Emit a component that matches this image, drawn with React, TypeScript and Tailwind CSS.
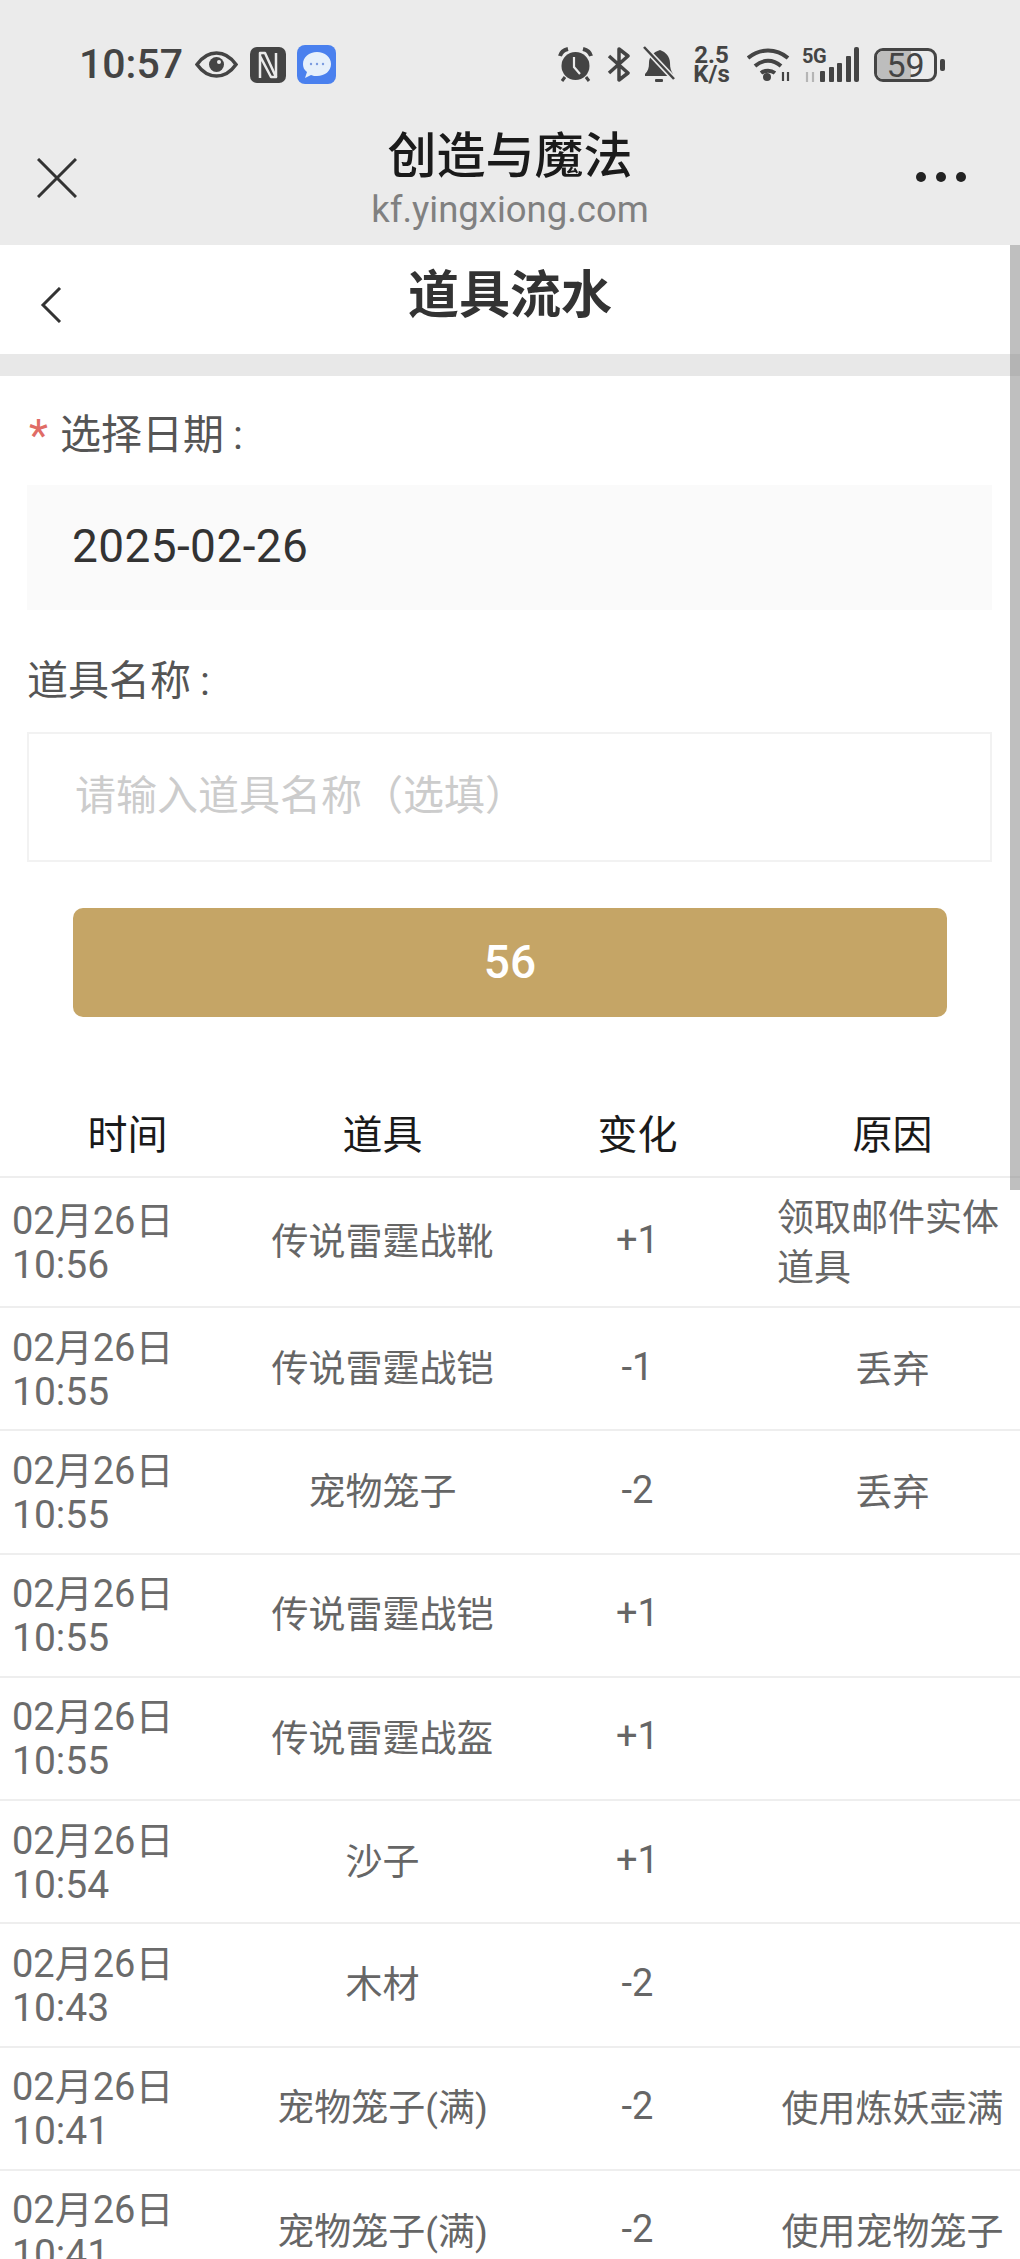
const font = "font-['Roboto','Noto_Sans_CJK_SC',sans-serif]";

const rows = [
  { date: "02月26日", time: "10:56", item: "传说雷霆战靴", delta: "+1", reason: "领取邮件实体道具" },
  { date: "02月26日", time: "10:55", item: "传说雷霆战铠", delta: "-1", reason: "丢弃" },
  { date: "02月26日", time: "10:55", item: "宠物笼子", delta: "-2", reason: "丢弃" },
  { date: "02月26日", time: "10:55", item: "传说雷霆战铠", delta: "+1", reason: "" },
  { date: "02月26日", time: "10:55", item: "传说雷霆战盔", delta: "+1", reason: "" },
  { date: "02月26日", time: "10:54", item: "沙子", delta: "+1", reason: "" },
  { date: "02月26日", time: "10:43", item: "木材", delta: "-2", reason: "" },
  { date: "02月26日", time: "10:41", item: "宠物笼子(满)", delta: "-2", reason: "使用炼妖壶满" },
  { date: "02月26日", time: "10:41", item: "宠物笼子(满)", delta: "-2", reason: "使用宠物笼子" },
];

const StatusLeft = () => (
  <div className="flex items-center">
    <span className="text-[41px] font-medium leading-none text-[#444] ml-[79px] w-[103px]">10:57</span>
    <svg className="ml-[13px]" width="43" height="27" viewBox="0 0 43 27">
      <path d="M2 13.5C8 5 15 2 21.5 2S35 5 41 13.5C35 22 28 25 21.5 25S8 22 2 13.5z" fill="none" stroke="#444" strokeWidth="3.5" />
      <circle cx="21.5" cy="13.5" r="7.5" fill="#444" />
      <circle cx="24" cy="11" r="2" fill="#ebebeb" />
    </svg>
    <svg className="ml-[12px]" width="36" height="36" viewBox="0 0 36 36">
      <rect width="36" height="36" rx="7" fill="#444" />
      <path d="M10 31V6h5l11 24h-5L10 9" fill="none" stroke="#ebebeb" strokeWidth="2.5" strokeLinejoin="round" />
      <path d="M26 6v24" stroke="#ebebeb" strokeWidth="2.5" />
    </svg>
    <svg className="ml-[11px]" width="39" height="39" viewBox="0 0 39 39">
      <rect width="39" height="39" rx="8" fill="#4a80ee" />
      <path d="M20 7c8 0 14 5 14 12s-6 12-14 12c-2 0-4 0-6-1l-6 3 2-6c-3-2-4-5-4-8 0-7 6-12 14-12z" fill="#e6f0fb" />
      <circle cx="14" cy="19" r="1.2" fill="#7a9be0" />
      <circle cx="20" cy="19" r="1.2" fill="#7a9be0" />
      <circle cx="26" cy="19" r="1.2" fill="#7a9be0" />
    </svg>
  </div>
);

const StatusRight = () => (
  <div className="flex items-center mr-[75px]">
    <svg width="35" height="35" viewBox="0 0 35 35">
      <circle cx="17.5" cy="19" r="14" fill="#444" />
      <path d="M16 10v10l6 7" fill="none" stroke="#ebebeb" strokeWidth="2.2" />
      <path d="M2 9c1-4 4-6 8-7M33 9c-1-4-4-6-8-7" fill="none" stroke="#444" strokeWidth="4" />
      <path d="M7 30l-3 4M28 30l3 4" stroke="#444" strokeWidth="3" />
    </svg>
    <svg className="ml-[14px]" width="23" height="35" viewBox="0 0 23 35">
      <path d="M2 9l19 17-9 7V2l9 7L2 26" fill="none" stroke="#444" strokeWidth="3.5" strokeLinejoin="round" />
    </svg>
    <svg className="ml-[13px]" width="32" height="37" viewBox="0 0 32 37">
      <path d="M2 28c3-3 4-6 4-11 0-6 4-11 11-13 6 2 10 7 10 13 0 5 1 8 3 11v2H2z" fill="#444" />
      <rect x="12" y="33" width="8" height="3" rx="1" fill="#444" />
      <path d="M1 1l30 32" stroke="#ebebeb" strokeWidth="5.5" />
      <path d="M1 1l30 32" stroke="#444" strokeWidth="2.5" />
    </svg>
    <div className="ml-[18px] w-[37px] flex flex-col items-center text-[24px] font-bold leading-[19px] text-[#444]">
      <span>2.5</span>
      <span>K/s</span>
    </div>
    <svg className="ml-[17px]" width="44" height="35" viewBox="0 0 44 35">
      <path d="M1 11C13 1 29 1 41 11M8 19c8-7 18-7 26 0M14 26c4-3 10-3 14 0" fill="none" stroke="#444" strokeWidth="4" />
      <circle cx="20" cy="30" r="4" fill="#444" />
      <path d="M36 34v-9M41 34v-9" stroke="#444" strokeWidth="2.2" />
    </svg>
    <div className="ml-[11px] flex items-end h-[35px]">
      <div className="flex flex-col w-[18px] h-full justify-between">
        <span className="text-[20px] font-bold leading-[18px] text-[#444] tracking-[-0.5px] whitespace-nowrap">5G</span>
        <svg width="16" height="10" viewBox="0 0 16 10">
          <path d="M5 0v10M11 0v10" stroke="#b5b5b5" strokeWidth="2.2" />
        </svg>
      </div>
      <div className="flex items-end gap-[3.5px]">
        <div className="w-[5px] h-[11px] rounded-[1px] bg-[#444]" />
        <div className="w-[5px] h-[15px] rounded-[1px] bg-[#444]" />
        <div className="w-[5px] h-[19px] rounded-[1px] bg-[#444]" />
        <div className="w-[5px] h-[26px] rounded-[1px] bg-[#444]" />
        <div className="w-[5px] h-[35px] rounded-[2px] bg-[#444]" />
      </div>
    </div>
    <div className="ml-[15px] w-[63px] h-[34px] rounded-[9px] border-[3px] border-[#444] relative flex items-center justify-center">
      <div className="absolute left-0 top-0 bottom-0 w-[59%] rounded-l-[6px] bg-[#bdbdbd]" />
      <span className="relative text-[34px] font-normal leading-[28px] text-[#444]">59</span>
    </div>
    <div className="ml-[3px] w-[5px] h-[12px] rounded-[2px] bg-[#444]" />
  </div>
);

const Row = ({ row, tall }: { row: (typeof rows)[number]; tall: boolean }) => (
  <div className={`grid grid-cols-4 border-b-2 border-[#eeeeee] text-[37px] text-[#666] shrink-0 ${tall ? "h-[130px]" : "h-[123.25px]"}`}>
    <div className="flex flex-col justify-center pl-[12px] pt-[2px] leading-[44px] text-[#6b6b6b]">
      <span className="text-[38px]">{row.date}</span>
      <span className="text-[39px]">{row.time}</span>
    </div>
    <div className="flex items-center justify-center whitespace-nowrap pt-[2px]">{row.item}</div>
    <div className="flex items-center justify-center pb-[3px] text-[38px]">{row.delta}</div>
    <div className="flex items-center justify-center px-[12px] leading-[50px] pt-[4px]">
      <span>{row.reason}</span>
    </div>
  </div>
);

export default function App() {
  return (
    <div className={`${font} relative w-[1020px] h-[2259px] overflow-hidden bg-white`}>
      <div className="h-[245px] bg-[#ebebeb] relative flex flex-col">
        <div className="flex items-center justify-between pt-[45px] h-[84px]">
          <StatusLeft />
          <StatusRight />
        </div>
        <div className="flex items-start flex-1">
          <div className="flex-1">
            <svg className="ml-[37px] mt-[74px]" width="40" height="40" viewBox="0 0 40 40">
              <path d="M1 1l38 38M39 1L1 39" stroke="#333" strokeWidth="3" />
            </svg>
          </div>
          <div className="flex flex-col items-center mt-[41px]">
            <span className="text-[49px] font-medium leading-[64px] text-[#1a1a1a]">创造与魔法</span>
            <span className="text-[36.5px] leading-[42px] text-[#808080]">kf.yingxiong.com</span>
          </div>
          <div className="flex-1 flex justify-end">
            <div className="flex gap-[10px] mr-[54px] mt-[88px]">
              <div className="w-[10px] h-[10px] rounded-full bg-[#222]" />
              <div className="w-[10px] h-[10px] rounded-full bg-[#222]" />
              <div className="w-[10px] h-[10px] rounded-full bg-[#222]" />
            </div>
          </div>
        </div>
      </div>

      <div className="h-[109px] flex items-center justify-center relative">
        <svg className="absolute left-[40px] top-[42px]" width="22" height="36" viewBox="0 0 22 36">
          <path d="M20 1L3 18l17 17" fill="none" stroke="#333" strokeWidth="3" />
        </svg>
        <span className="text-[51px] font-bold text-[#333] -mt-[6px]">道具流水</span>
      </div>
      <div className="h-[22px] bg-[#e8e8e8]" />

      <div className="px-[27px] pr-[28px]">
        <div className="flex items-center h-[60px] mt-[30px] text-[41px] text-[#555]">
          <span className="text-[#e06c66] ml-[2px] w-[31px] text-[44px]">*</span>
          <span>选择日期</span>
          <span className="ml-[9px]">:</span>
        </div>
        <div className="h-[125px] mt-[19px] pb-[3px] bg-[#fafafa] flex items-center pl-[45px] text-[46px] text-[#333] tracking-[0.4px]">2025-02-26</div>
        <div className="h-[60px] mt-[42px] flex items-center text-[41px] text-[#555]">
          <span>道具名称</span>
          <span className="ml-[9px]">:</span>
        </div>
        <div className="h-[130px] mt-[20px] border-2 border-[#f2f2f2] flex items-center pl-[46px] text-[41px] text-[#cccccc]">
          请输入道具名称（选填）
        </div>
        <button className="mt-[46px] ml-[46px] w-[874px] h-[109px] rounded-[10px] bg-[#c5a566] text-white text-[46px] font-medium flex items-center justify-center">
          56
        </button>
      </div>

      <div className="grid grid-cols-4 h-[94px] mt-[67px] border-b-2 border-[#eeeeee] text-[40px] text-[#1a1a1a] items-center text-center pt-[12px]">
        <span>时间</span>
        <span>道具</span>
        <span>变化</span>
        <span>原因</span>
      </div>
      <div className="flex flex-col">
        {rows.map((r, i) => (
          <Row key={i} row={r} tall={i === 0} />
        ))}
      </div>

      <div className="absolute right-0 top-[245px] w-[10px] h-[945px] bg-[#808080]/50" />
    </div>
  );
}
